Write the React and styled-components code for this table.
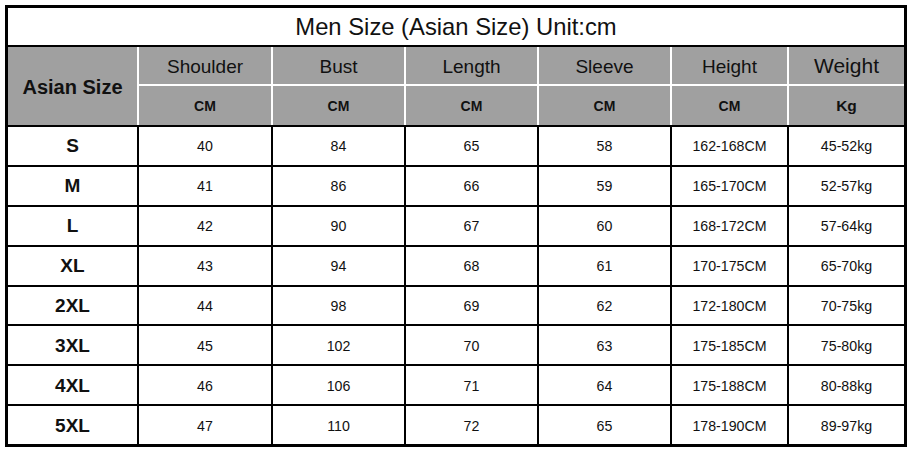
import React from "react";
import styled, { createGlobalStyle } from "styled-components";

const Global = createGlobalStyle`
  html, body { margin: 0; padding: 0; background: #fff; }
  body { font-family: "Liberation Sans", Arial, sans-serif; color: #111; }
`;

const Page = styled.div`
  padding: 5px;
`;

const Chart = styled.div`
  width: 896px;
  border: 3px solid #000;
  display: flex;
  flex-direction: column;
  background: #fff;
`;

const Title = styled.div`
  height: 37px;
  border-bottom: 2px solid #000;
  display: flex;
  align-items: center;
  justify-content: center;
  font-size: 23.8px;
  color: #111;
`;

const cols = "129px 132px 131px 131px 131px 115px 115px";

const Head = styled.div`
  display: grid;
  grid-template-columns: ${cols};
  grid-template-rows: 37px 39px;
  gap: 2px;
  background: #fff;
  border-bottom: 2px solid #000;
`;

const HeadCell = styled.div`
  background: #a0a0a0;
  display: flex;
  align-items: center;
  justify-content: center;
  color: #111;
  font-size: ${(p) => p.$size || 19}px;
  font-weight: ${(p) => (p.$bold ? 700 : 400)};
  grid-row: ${(p) => (p.$span ? "1 / span 2" : "auto")};
  padding-top: ${(p) => p.$pt || 0}px;
`;

const Body = styled.div`
  display: grid;
  grid-template-columns: ${cols};
  grid-template-rows: repeat(8, 1fr);
  height: 317px;
  gap: 2px;
  background: #000;
`;

const Cell = styled.div`
  background: #fff;
  display: flex;
  align-items: center;
  justify-content: center;
  padding-top: 1px;
  color: #111;
  font-size: ${(p) => (p.$label ? "19px" : "14.2px")};
  font-weight: ${(p) => (p.$label ? 700 : 400)};
`;

const headers = [
  ["Shoulder", "CM"],
  ["Bust", "CM"],
  ["Length", "CM"],
  ["Sleeve", "CM"],
  ["Height", "CM"],
  ["Weight", "Kg"],
];

const rows = [
  ["S", "40", "84", "65", "58", "162-168CM", "45-52kg"],
  ["M", "41", "86", "66", "59", "165-170CM", "52-57kg"],
  ["L", "42", "90", "67", "60", "168-172CM", "57-64kg"],
  ["XL", "43", "94", "68", "61", "170-175CM", "65-70kg"],
  ["2XL", "44", "98", "69", "62", "172-180CM", "70-75kg"],
  ["3XL", "45", "102", "70", "63", "175-185CM", "75-80kg"],
  ["4XL", "46", "106", "71", "64", "175-188CM", "80-88kg"],
  ["5XL", "47", "110", "72", "65", "178-190CM", "89-97kg"],
];

export default function App() {
  return (
    <Page>
      <Global />
      <Chart>
        <Title>Men Size (Asian Size) Unit:cm</Title>
        <Head>
          <HeadCell $span $bold $size={20} $pt={2}>
            Asian Size
          </HeadCell>
          {headers.map(([name]) => (
            <HeadCell key={name} $size={name === "Weight" ? 21 : 19} $pt={name === "Weight" ? 0 : 3}>
              {name}
            </HeadCell>
          ))}
          {headers.map(([name, unit]) => (
            <HeadCell key={name + "u"} $bold $size={unit === "Kg" ? 15.5 : 14}>
              {unit}
            </HeadCell>
          ))}
        </Head>
        <Body>
          {rows.map((r) =>
            r.map((v, j) => (
              <Cell key={r[0] + j} $label={j === 0}>
                {v}
              </Cell>
            ))
          )}
        </Body>
      </Chart>
    </Page>
  );
}
